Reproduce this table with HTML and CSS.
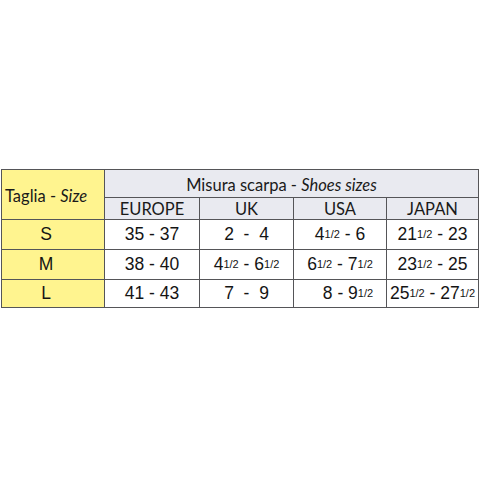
FILE: index.html
```html
<!DOCTYPE html>
<html>
<head>
<meta charset="utf-8">
<link rel="stylesheet" href="styles.css">
</head>
<body>
<div class="wrap">
<table class="sizes">
  <colgroup>
    <col class="c0"><col class="c1"><col class="c2"><col class="c3"><col class="c4">
  </colgroup>
  <tr class="h1">
    <th class="taglia" rowspan="2">Taglia - <i>Size</i></th>
    <th class="misura" colspan="4">Misura scarpa - <i>Shoes sizes</i></th>
  </tr>
  <tr class="h2">
    <th class="hd">EUROPE</th>
    <th class="hd">UK</th>
    <th class="hd">USA</th>
    <th class="hd">JAPAN</th>
  </tr>
  <tr class="r">
    <td class="sz">S</td>
    <td>35 - 37</td>
    <td>2  -  4</td>
    <td>4<span class="fr">1/2</span> - 6</td>
    <td>21<span class="fr">1/2</span> - 23</td>
  </tr>
  <tr class="r">
    <td class="sz">M</td>
    <td>38 - 40</td>
    <td>4<span class="fr">1/2</span> - 6<span class="fr">1/2</span></td>
    <td>6<span class="fr">1/2</span> - 7<span class="fr">1/2</span></td>
    <td>23<span class="fr">1/2</span> - 25</td>
  </tr>
  <tr class="r last">
    <td class="sz">L</td>
    <td>41 - 43</td>
    <td>7  -  9</td>
    <td class="shift">8 - 9<span class="fr">1/2</span></td>
    <td>25<span class="fr">1/2</span> - 27<span class="fr">1/2</span></td>
  </tr>
</table>
</div>
</body>
</html>
```
FILE: styles.css
```css
html, body {
  margin: 0;
  padding: 0;
  background: #ffffff;
}
.wrap {
  padding: 169px 2px 0 1px;
}
.sizes {
  border-collapse: collapse;
  width: 477px;
  table-layout: fixed;
  color: #141414;
}
.c0 { width: 103px; }
.c1 { width: 95px; }
.c2 { width: 94px; }
.c3 { width: 93px; }
.c4 { width: 92px; }
.sizes th, .sizes td {
  border: 1px solid #555558;
  padding: 0;
  text-align: center;
  vertical-align: middle;
}
.sizes th {
  font-family: Lato, "Open Sans", sans-serif;
  font-weight: normal;
  font-size: 16.5px;
  background: #e9eaf0;
  color: #1a1a1a;
}
.sizes th i { font-style: italic; }
.sizes th.taglia {
  background: #fff48f;
  text-align: left;
  padding-left: 3px;
  font-size: 16.5px;
  padding-top: 2px;
}
.h1 { height: 28px; }
.h1 th.misura {
  padding-right: 20px;
  padding-top: 2px;
}
.h2 { height: 22px; }
.h2 th.hd { padding-top: 1px; }
.r { height: 30px; }
.r.last { height: 28px; }
.sizes td {
  font-family: "Liberation Sans", Arial, sans-serif;
  font-size: 17.5px;
  background: #ffffff;
  white-space: pre;
  color: #141414;
}
.sizes td.sz {
  background: #fff48f;
  padding-right: 14px;
}
.sizes td.shift { padding-left: 16px; }
.fr {
  font-size: 11px;
  vertical-align: 2px;
}
```
